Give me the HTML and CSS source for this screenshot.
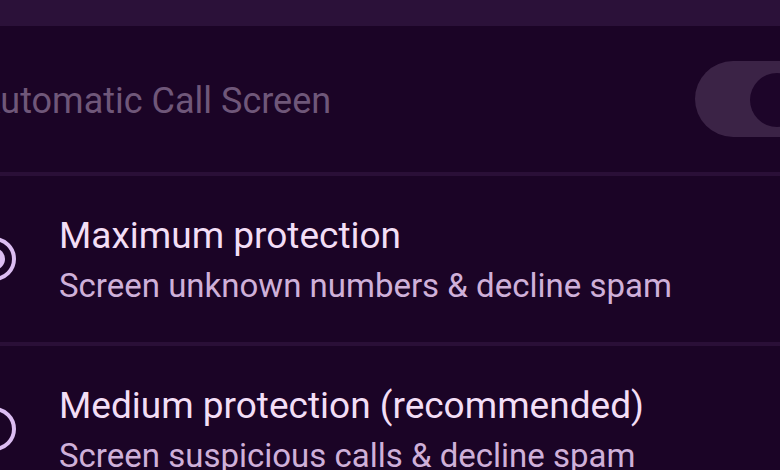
FILE: index.html
```html
<!DOCTYPE html>
<html lang="en">
<head>
	<meta charset="UTF-8">
	<title>Call Screen</title>
	<link rel="stylesheet" href="styles.css">
</head>
<body>
	<div class="screen">
		<div class="topbar"></div>

		<div class="switch-row">
			<span class="switch-label">Automatic Call Screen</span>
			<div class="switch">
				<div class="switch-thumb"></div>
			</div>
		</div>

		<div class="divider"></div>

		<div class="option">
			<div class="radio checked"></div>
			<div class="option-text">
				<div class="option-title">Maximum protection</div>
				<div class="option-sub">Screen unknown numbers &amp; decline spam</div>
			</div>
		</div>

		<div class="divider"></div>

		<div class="option">
			<div class="radio"></div>
			<div class="option-text">
				<div class="option-title">Medium protection (recommended)</div>
				<div class="option-sub">Screen suspicious calls &amp; decline spam</div>
			</div>
		</div>
	</div>
</body>
</html>
```

FILE: styles.css
```css
* {
	padding: 0;
	margin: 0;
	box-sizing: border-box;
}
html,
body {
	height: 100%;
	overflow: hidden;
}
body {
	background-color: #1b0426;
	font-family: Roboto, "Noto Sans", sans-serif;
}
.screen {
	width: 100%;
}
.topbar {
	height: 26px;
	background-color: #2b1139;
}

/* 开关行 */
.switch-row {
	height: 146px;
	display: flex;
	align-items: center;
	justify-content: space-between;
	margin-left: -23px;
}
.switch-label {
	font-size: 36px;
	color: #6f5779;
	white-space: nowrap;
	padding-top: 4px;
}
.switch {
	width: 120px;
	height: 76px;
	margin-right: -35px;
	border-radius: 38px;
	background-color: #3b2346;
	display: flex;
	align-items: center;
	padding-left: 55px;
	padding-top: 2px;
}
.switch-thumb {
	width: 54px;
	height: 54px;
	border-radius: 50%;
	background-color: #1d0529;
}

.divider {
	height: 4px;
	background-color: #2a0f37;
}

/* 单选项 */
.option {
	height: 166px;
	display: flex;
	align-items: center;
	gap: 43px;
	margin-left: -28px;
}
.radio {
	flex: none;
	width: 44px;
	height: 44px;
	border: 4px solid #dcbdf2;
	border-radius: 50%;
	display: flex;
	align-items: center;
	justify-content: center;
}
.radio.checked::after {
	content: "";
	width: 22px;
	height: 22px;
	border-radius: 50%;
	background-color: #dcbdf2;
}
.option-text {
	white-space: nowrap;
	padding-top: 4px;
}
.option-title {
	font-size: 37px;
	line-height: 46px;
	color: #f3def6;
}
.option-sub {
	font-size: 33px;
	line-height: 46px;
	margin-top: 4px;
	color: #cfb0d9;
}
```
